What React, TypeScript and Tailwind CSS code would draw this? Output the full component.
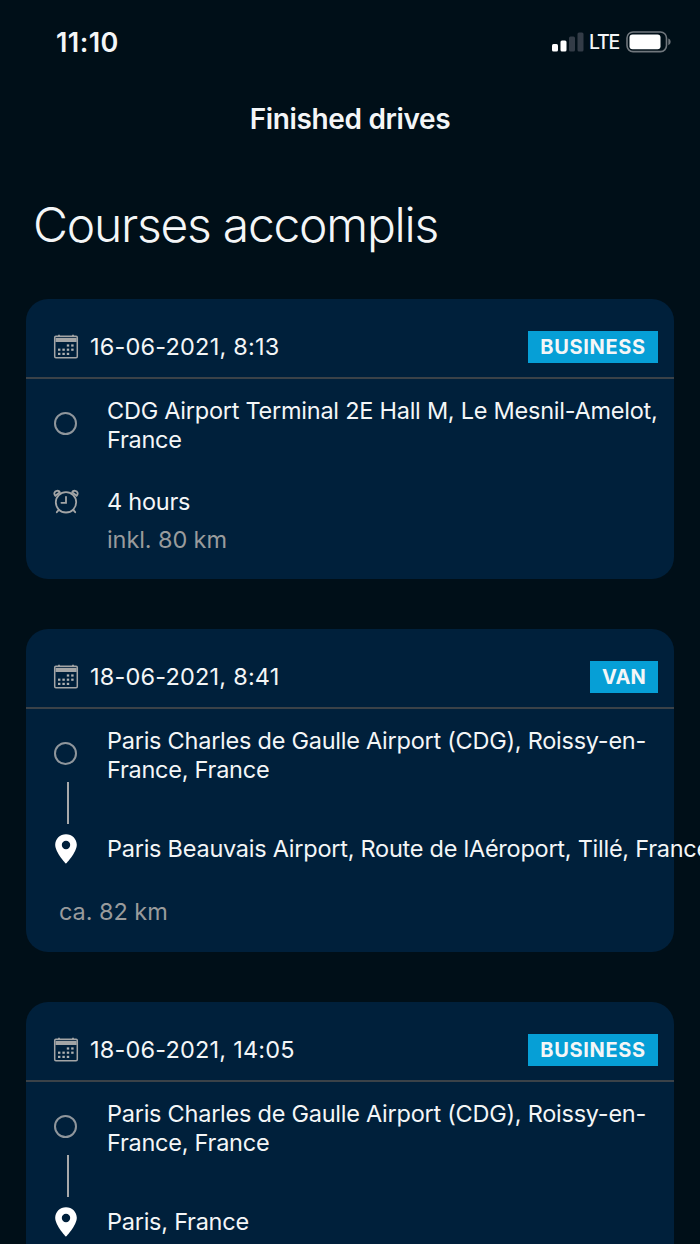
/**
 * Finished Drives Screen
 *
 * Mobile list of completed rides, one card per ride.
 */

type Category = 'BUSINESS' | 'VAN';

interface Drive {
  date: string;
  category: Category;
  from: string;
  /** Destination, missing for hourly bookings */
  to?: string;
  /** Booked duration, only for hourly bookings */
  duration?: string;
  distance?: string;
}

const DRIVES: Drive[] = [
  {
    date: '16-06-2021, 8:13',
    category: 'BUSINESS',
    from: 'CDG Airport Terminal 2E Hall M, Le Mesnil-Amelot, France',
    duration: '4 hours',
    distance: 'inkl. 80 km',
  },
  {
    date: '18-06-2021, 8:41',
    category: 'VAN',
    from: 'Paris Charles de Gaulle Airport (CDG), Roissy-en-France, France',
    to: 'Paris Beauvais Airport, Route de lAéroport, Tillé, France',
    distance: 'ca. 82 km',
  },
  {
    date: '18-06-2021, 14:05',
    category: 'BUSINESS',
    from: 'Paris Charles de Gaulle Airport (CDG), Roissy-en-France, France',
    to: 'Paris, France',
  },
];

const BADGE_CLASSES: Record<Category, string> = {
  BUSINESS: 'w-[130px] tracking-[0.65px]',
  VAN: 'w-[68px] tracking-[0.2px]',
};

/** Dots of the calendar sheet as [column, row] */
const CALENDAR_DOTS = [
  [2, 0], [3, 0],
  [0, 1], [1, 1], [2, 1], [3, 1],
  [0, 2], [1, 2], [2, 2],
];

function CalendarIcon() {
  return (
    <svg className="h-[25px] w-[26px] shrink-0" viewBox="0 0 26 25" fill="none">
      <rect x="1.7" y="2.2" width="22.6" height="21.6" rx="1.2" stroke="#a3a5a6" strokeWidth="1.5" />
      <path d="M2.5 3.8H23.7V8H2.5Z" fill="#a3a5a6" />
      <path d="M6 0.8V3M20 0.8V3" stroke="#a3a5a6" strokeWidth="1.8" />
      {CALENDAR_DOTS.map(([col, row]) => (
        <rect
          key={`${col}-${row}`}
          x={5 + col * 4.4}
          y={10.4 + row * 4.2}
          width="2.4"
          height="2.2"
          fill="#b0b2b2"
        />
      ))}
    </svg>
  );
}

function AlarmIcon() {
  return (
    <svg
      className="h-[26px] w-[26px]"
      viewBox="0 0 26 26"
      fill="none"
      stroke="#a3a5a6"
      strokeWidth="1.8"
      strokeLinecap="round"
    >
      <circle cx="13" cy="13.3" r="10.2" />
      <path d="M13 7.8V13.8H8.4" />
      <path d="M5.8 20.8L3.8 23.2M20.2 20.8L22.2 23.2" />
      <path d="M2.4 6.8C0.4 4.8 1.4 2.2 3.8 1.8C5.2 1.6 6.4 2.2 6.8 3.2Z" />
      <path d="M23.6 6.8C25.6 4.8 24.6 2.2 22.2 1.8C20.8 1.6 19.6 2.2 19.2 3.2Z" />
    </svg>
  );
}

function PinIcon() {
  return (
    <svg className="h-[30px] w-[22px]" viewBox="0 0 22 30" fill="#fff">
      <path
        fillRule="evenodd"
        d="M11 0.2C4.9 0.2 0.2 4.9 0.2 10.8C0.2 18.5 11 29.8 11 29.8C11 29.8 21.8 18.5 21.8 10.8C21.8 4.9 17.1 0.2 11 0.2ZM11 6.8A4.2 4.2 0 1 1 11 15.2A4.2 4.2 0 1 1 11 6.8Z"
      />
    </svg>
  );
}

function StatusBar() {
  return (
    <div className="flex h-[84px] items-center justify-between pr-7 pl-[56px]">
      <span className="text-[27px] leading-none font-semibold tracking-[0.4px]">11:10</span>
      <div className="flex items-center">
        <svg className="h-5 w-8" viewBox="0 0 32 20">
          <rect x="0" y="12" width="6" height="7.5" rx="1.5" fill="#fff" />
          <rect x="8.5" y="8.5" width="6" height="11" rx="1.5" fill="#fff" />
          <rect x="17" y="4.5" width="6" height="15" rx="1.5" fill="#333c47" />
          <rect x="25.5" y="0.5" width="6" height="19" rx="1.5" fill="#333c47" />
        </svg>
        <span className="ml-[5px] w-8 pt-0.5 text-[19.5px] leading-none font-medium tracking-[-1.2px]">
          LTE
        </span>
        <svg className="ml-[5px] h-[22px] w-[46px]" viewBox="0 0 46 22" fill="none">
          <rect x="1" y="1" width="39.5" height="19.6" rx="6" stroke="#70777d" strokeWidth="1.6" />
          <rect x="3.5" y="3.6" width="31" height="14.6" rx="3" fill="#fff" />
          <path d="M42.3 7.6C45.4 8.6 45.4 13.2 42.3 14.2Z" fill="#70777d" />
        </svg>
      </div>
    </div>
  );
}

function DriveCard({ drive }: { drive: Drive }) {
  return (
    <section className="rounded-[22px] bg-[#00203b] text-[23.5px] leading-[29px] tracking-[-0.25px]">
      {/* Date and vehicle class */}
      <div className="flex h-20 items-center justify-between border-b-2 border-[#3b4248] pt-[17px] pr-4 pl-[27px]">
        <div className="flex items-center gap-[11px]">
          <CalendarIcon />
          <span className="tracking-[0.2px]">{drive.date}</span>
        </div>
        <span
          className={`h-8 bg-[#069fd6] text-center text-[20px] leading-8 font-bold ${BADGE_CLASSES[drive.category]}`}
        >
          {drive.category}
        </span>
      </div>

      {/* Pickup */}
      <div className="flex pt-[17px]">
        <div className="flex w-[81px] shrink-0 flex-col pt-4 pl-[28px]">
          <div className="h-[23px] w-[23px] rounded-full border-2 border-[#8f969c]" />
          {drive.to && <div className="mt-[17px] ml-[13px] h-[42px] w-[1.5px] bg-[#a8a9aa]" />}
        </div>
        <p className="w-[565px]">{drive.from}</p>
      </div>

      {drive.to ? (
        <>
          {/* Destination, long addresses run past the card */}
          <div className="mt-2 flex h-[33px] items-center">
            <div className="w-[81px] shrink-0 pl-[29px]">
              <PinIcon />
            </div>
            <span className="whitespace-nowrap">{drive.to}</span>
          </div>
          <p className="h-[87px] pt-8 pl-[33px] tracking-[-0.05px] text-[#999b9c]">
            {drive.distance}
          </p>
        </>
      ) : (
        <div className="flex pt-[33px] pb-[25px]">
          <div className="w-[81px] shrink-0 pt-[2px] pl-[27px]">
            <AlarmIcon />
          </div>
          <div>
            <p>{drive.duration}</p>
            <p className="mt-[9px] tracking-[-0.1px] text-[#999b9c]">{drive.distance}</p>
          </div>
        </div>
      )}
    </section>
  );
}

export default function App() {
  return (
    <main className="h-[1244px] w-[700px] overflow-hidden bg-[#000f18] font-['Inter',sans-serif] text-[#f4f6f7]">
      <StatusBar />
      <header className="flex h-[70px] items-center justify-center text-[28px] font-semibold tracking-[-0.35px]">
        Finished drives
      </header>
      <h1 className="flex h-[145px] items-center pb-1 pl-[33px] text-[48px] leading-none font-light tracking-[-1.25px]">
        Courses accomplis
      </h1>
      <div className="flex flex-col gap-[50px] px-[26px]">
        {DRIVES.map((drive) => (
          <DriveCard key={drive.date} drive={drive} />
        ))}
      </div>
    </main>
  );
}
